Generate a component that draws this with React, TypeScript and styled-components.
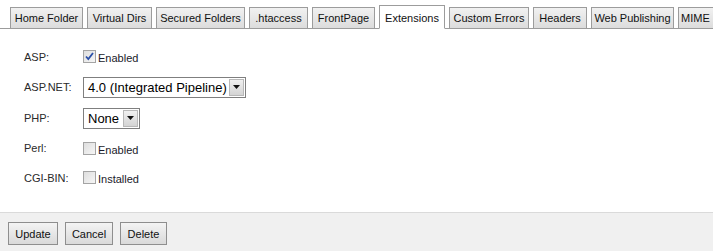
import * as React from 'react';
import styled, { createGlobalStyle } from 'styled-components';

const tabs = [
  { title: 'Home Folder', w: 73 },
  { title: 'Virtual Dirs', w: 65 },
  { title: 'Secured Folders', w: 89 },
  { title: '.htaccess', w: 59 },
  { title: 'FrontPage', w: 63 },
  { title: 'Extensions', w: 66, active: true },
  { title: 'Custom Errors', w: 80 },
  { title: 'Headers', w: 54 },
  { title: 'Web Publishing', w: 83 },
  { title: 'MIME', w: 60, start: true },
];

const Check = ({ checked, label }: { checked?: boolean; label: string }) => (
  <CheckWrap>
    <Box>
      {checked && (
        <svg width="11" height="11" viewBox="0 0 11 11">
          <path d="M2 5.5 L4.3 8 L9 2" fill="none" stroke="#2a4fa8" strokeWidth="1.8" />
        </svg>
      )}
    </Box>
    <CheckText>{label}</CheckText>
  </CheckWrap>
);

const Select = ({ value, w }: { value: string; w: number }) => (
  <SelectBox $w={w}>
    <SelectValue>{value}</SelectValue>
    <Arrow>
      <svg width="7" height="4" viewBox="0 0 7 4">
        <path d="M0 0 H7 L3.5 4 Z" fill="#111" />
      </svg>
    </Arrow>
  </SelectBox>
);

export default () => {
  return (
    <>
      <Global />
      <Page>
        <TabBar>
          {tabs.map((t) => (
            <Tab key={t.title} $w={t.w} $active={t.active} $start={t.start}>
              {t.title}
            </Tab>
          ))}
        </TabBar>
        <Form>
          <Row $h={29}>
            <Label>ASP:</Label>
            <Check checked label="Enabled" />
          </Row>
          <Row $h={32}>
            <Label>ASP.NET:</Label>
            <Select value="4.0 (Integrated Pipeline)" w={163} />
          </Row>
          <Row $h={30}>
            <Label>PHP:</Label>
            <Select value="None" w={57} />
          </Row>
          <Row $h={30}>
            <Label>Perl:</Label>
            <Check label="Enabled" />
          </Row>
          <Row $h={29}>
            <Label>CGI-BIN:</Label>
            <Check label="Installed" />
          </Row>
        </Form>
        <Footer>
          <Button $w={50}>Update</Button>
          <Button $w={48}>Cancel</Button>
          <Button $w={47}>Delete</Button>
        </Footer>
      </Page>
    </>
  );
};

const Global = createGlobalStyle`
  html, body {
    margin: 0;
    padding: 0;
    background: #fff;
    font-family: "Liberation Sans", Arial, sans-serif;
    font-size: 11px;
    color: #222;
  }
`;
const Page = styled.div`
  width: 713px;
  height: 251px;
  display: flex;
  flex-direction: column;
  overflow: hidden;
  background: #fff;
`;
const TabBar = styled.div`
  display: flex;
  align-items: flex-end;
  gap: 4px;
  padding: 5px 0 0 10px;
  border-bottom: 1px solid #9c9c9c;
  white-space: nowrap;
`;
const Tab = styled.div<{ $w: number; $active?: boolean; $start?: boolean }>`
  box-sizing: border-box;
  flex: 0 0 ${(p) => p.$w}px;
  height: ${(p) => (p.$active ? 24 : 22)}px;
  margin-bottom: -1px;
  display: flex;
  align-items: center;
  justify-content: ${(p) => (p.$start ? 'flex-start' : 'center')};
  padding: ${(p) => (p.$active ? 1 : 0)}px 0 0 ${(p) => (p.$start ? 2 : 0)}px;
  border: 1px solid #9c9c9c;
  border-bottom-color: ${(p) => (p.$active ? '#fff' : '#9c9c9c')};
  background: ${(p) => (p.$active ? '#fff' : 'linear-gradient(#f1f1f1, #dcdcdc)')};
  color: #111;
  font-size: 11px;
`;
const Form = styled.div`
  flex: 1;
  padding: 13px 0 0 24px;
  border-bottom: 1px solid #dadada;
`;
const Row = styled.div<{ $h: number }>`
  display: grid;
  grid-template-columns: 59px auto;
  align-items: center;
  height: ${(p) => p.$h}px;
`;
const Label = styled.div`
  font-size: 11px;
  color: #2a2a2a;
`;
const CheckWrap = styled.div`
  display: flex;
  align-items: center;
  gap: 2px;
`;
const Box = styled.span`
  box-sizing: border-box;
  width: 13px;
  height: 13px;
  display: flex;
  align-items: center;
  justify-content: center;
  border: 1px solid #a4a4a4;
  background: linear-gradient(135deg, #dedede, #f6f6f6);
`;
const CheckText = styled.span`
  font-size: 11px;
  color: #1a1a2a;
  padding-top: 3px;
`;
const SelectBox = styled.div<{ $w: number }>`
  box-sizing: border-box;
  width: ${(p) => p.$w}px;
  height: 21px;
  display: flex;
  align-items: center;
  border: 1px solid #7f7f7f;
  background: #fff;
  padding: 1px;
`;
const SelectValue = styled.span`
  flex: 1;
  padding-left: 3px;
  font-family: "Liberation Sans", Arial, sans-serif;
  font-size: 13px;
  color: #000;
  white-space: nowrap;
`;
const Arrow = styled.span`
  box-sizing: border-box;
  width: 15px;
  height: 17px;
  display: flex;
  align-items: center;
  justify-content: center;
  border: 1px solid #b8b8b8;
  background: linear-gradient(#f0f0f0, #d4d4d4);
`;
const Footer = styled.div`
  height: 38px;
  display: flex;
  align-items: flex-start;
  gap: 7px;
  padding: 9px 0 0 8px;
  box-sizing: border-box;
  background: #f0f0f0;
`;
const Button = styled.button<{ $w: number }>`
  box-sizing: border-box;
  width: ${(p) => p.$w}px;
  height: 23px;
  padding: 0;
  border: 1px solid #8e8e8e;
  border-radius: 0;
  background: linear-gradient(#f4f4f4, #d9d9d9);
  font-family: "Liberation Sans", Arial, sans-serif;
  font-size: 11px;
  color: #111;
`;
